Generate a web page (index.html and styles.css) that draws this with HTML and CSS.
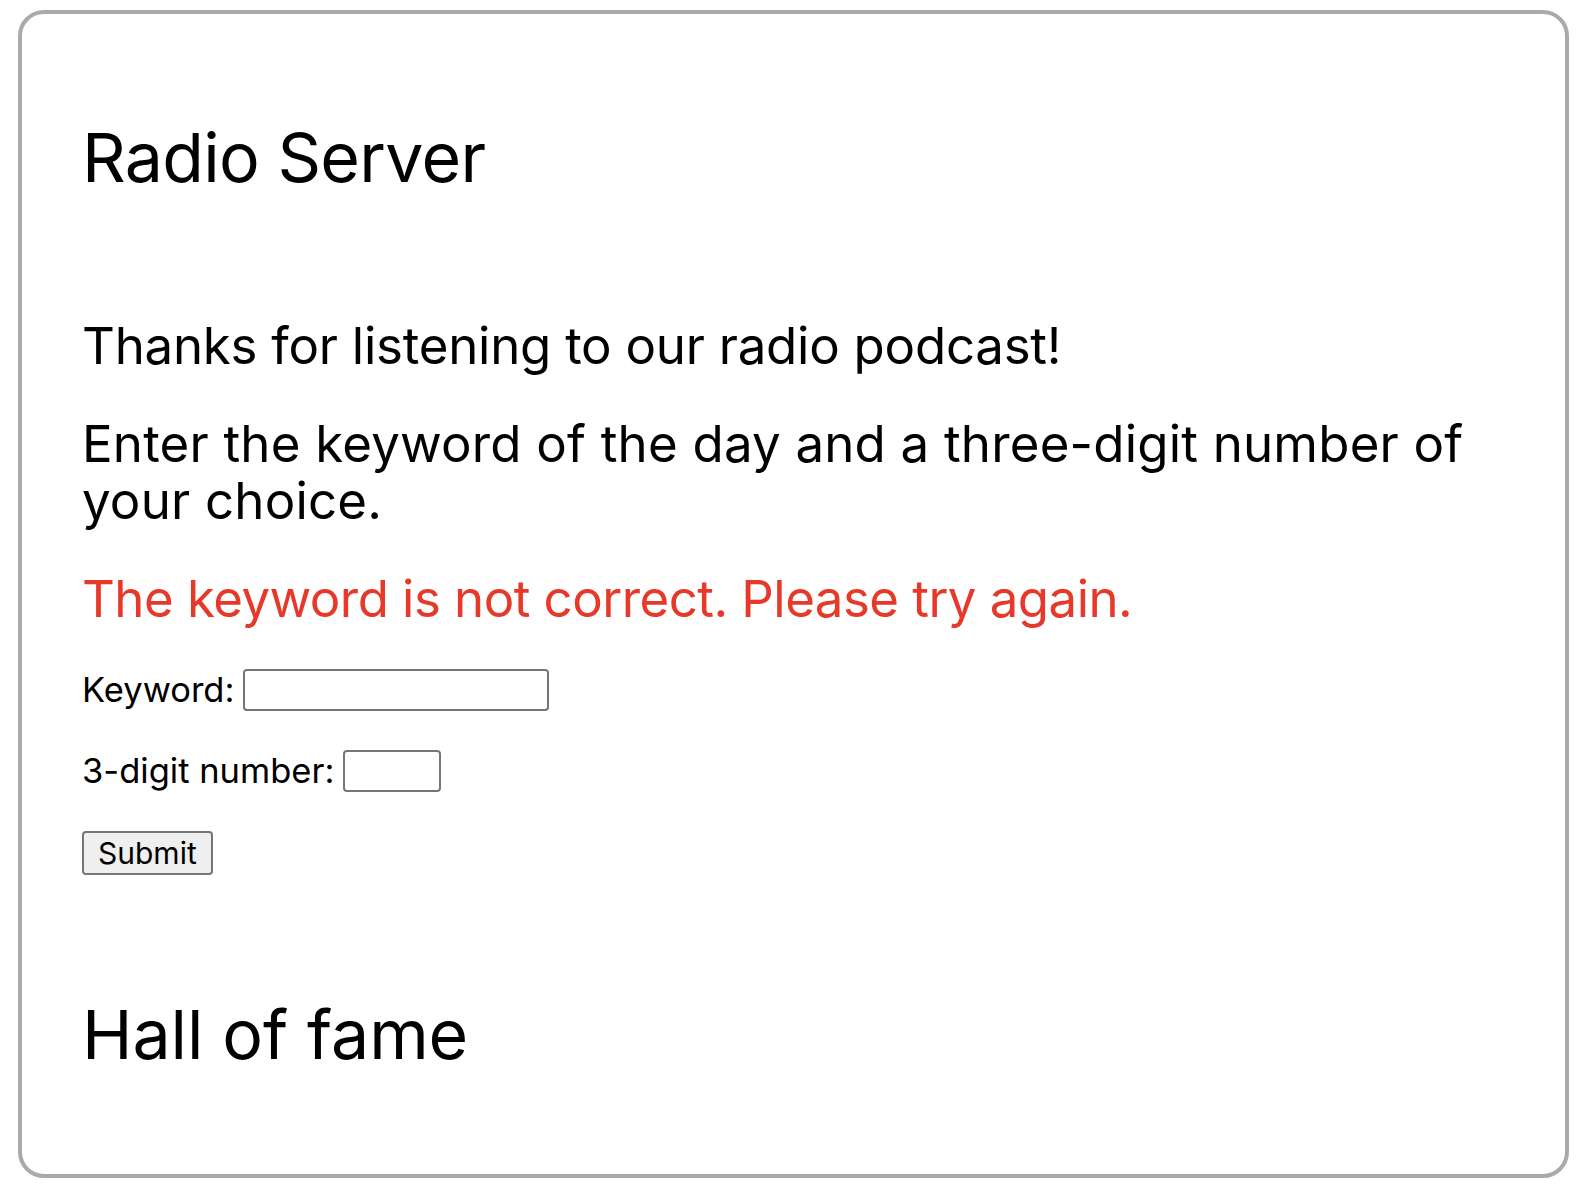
FILE: index.html
```html
<!DOCTYPE html>
<html lang="en">
<head>
<meta charset="utf-8">
<title>Radio Server</title>
<link rel="stylesheet" href="styles.css">
</head>
<body>
<main class="card">
  <h1 class="title">Radio Server</h1>
  <p class="text thanks">Thanks for listening to our radio podcast!</p>
  <p class="text intro">Enter the keyword of the day and a three-digit number of your choice.</p>
  <p class="text error">The keyword is not correct. Please try again.</p>
  <form class="form">
    <div class="row">
      <label class="label" for="kw">Keyword:</label>
      <input class="field field-wide" id="kw" type="text">
    </div>
    <div class="row">
      <label class="label" for="num">3-digit number:</label>
      <input class="field field-short" id="num" type="text">
    </div>
    <div class="row">
      <button class="submit" type="button">Submit</button>
    </div>
  </form>
  <h2 class="title fame">Hall of fame</h2>
</main>
</body>
</html>
```

FILE: styles.css
```css
html, body {
  margin: 0;
  padding: 0;
  background: #ffffff;
}

body {
  font-family: Inter, "Noto Sans", "Liberation Sans", sans-serif;
  color: #000000;
}

.card {
  margin: 10px 17px 18px 18px;
  border: 4px solid #aaaaaa;
  border-radius: 26px;
  padding: 109px 62px 106px 60px;
}

.title {
  margin: 0;
  font-size: 68px;
  line-height: 68px;
  font-weight: 400;
  letter-spacing: -0.7px;
}

.fame {
  margin-top: 125px;
  letter-spacing: -0.1px;
}

.text {
  margin: 41px 0 0 0;
  font-size: 51px;
  line-height: 57px;
  font-weight: 400;
}

.title + .text {
  margin-top: 126px;
}

.thanks {
  letter-spacing: -0.25px;
}

.intro {
  letter-spacing: 0.2px;
}

.error {
  color: #e6392a;
  letter-spacing: -0.55px;
}

.form {
  margin-top: 42px;
  display: flex;
  flex-direction: column;
  gap: 39px;
}

.row {
  display: flex;
  align-items: center;
  gap: 9px;
}

.label {
  font-size: 34.5px;
  line-height: 42px;
}

.field {
  box-sizing: border-box;
  height: 42px;
  border: 2px solid #767676;
  border-radius: 4px;
  background: #ffffff;
  padding: 0 4px;
  font: inherit;
}

.field-wide {
  width: 306px;
}

.field-short {
  width: 98px;
}

.submit {
  box-sizing: border-box;
  height: 44px;
  padding: 0 14px;
  border: 2px solid #767676;
  border-radius: 4px;
  background: #efefef;
  color: #000000;
  font-family: inherit;
  font-size: 30px;
  line-height: 1;
}
```
